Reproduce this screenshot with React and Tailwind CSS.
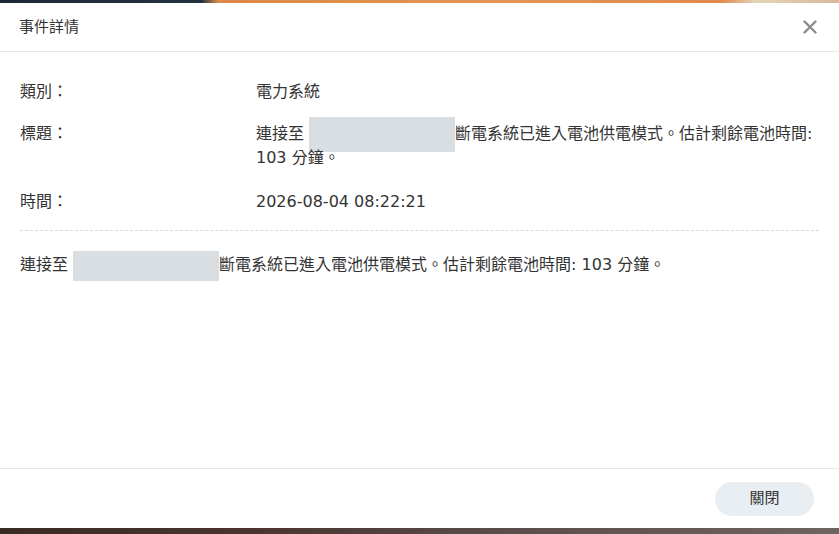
export default function App() {
  const font = { fontFamily: '"DejaVu Sans", "Noto Sans CJK TC", sans-serif' };
  return (
    <div
      className="h-[534px] w-full overflow-hidden bg-[linear-gradient(90deg,#3a2a26_0%,#4a3430_30%,#5a4c4c_60%,#6e6462_100%)]"
      style={font}
    >
      <div className="h-[3px] w-full bg-[linear-gradient(90deg,#1d2836_0%,#243142_24%,#dd8846_26%,#e59451_60%,#e08a4c_86%,#e4d4b6_90%,#d9b89a_100%)]" />
      <div className="flex h-[525px] flex-col bg-white text-[16px] text-[#333]">
        {/* header */}
        <div className="flex h-[49px] shrink-0 items-center justify-between border-b border-[#e6e6e6] pl-[19px] pr-[22px]">
          <span className="text-[15px] text-[#333]">事件詳情</span>
          <svg width="14" height="14" viewBox="0 0 14 14" className="text-[#8c8c8c]">
            <path d="M1.5 1.5 L12.5 12.5 M12.5 1.5 L1.5 12.5" stroke="currentColor" strokeWidth="2.4" strokeLinecap="round" />
          </svg>
        </div>

        {/* body */}
        <div className="flex-1 px-5 pt-[28px] leading-[24px]">
          <div className="flex">
            <div className="w-[236px] shrink-0">類別：</div>
            <div>電力系統</div>
          </div>
          <div className="mt-[18px] flex">
            <div className="w-[236px] shrink-0">標題：</div>
            <div className="flex-1">
              連接至{" "}
              <span className="-my-[6px] inline-block h-[35px] w-[146px] align-middle bg-[#d9dee3]" />
              斷電系統已進入電池供電模式。估計剩餘電池時間: 103 分鐘。
            </div>
          </div>
          <div className="mt-[20px] flex">
            <div className="w-[236px] shrink-0">時間：</div>
            <div>2026-08-04 08:22:21</div>
          </div>
          <div className="mt-[16px] border-t border-dashed border-[#d9d9d9]" />
          <div className="mt-[22px]">
            連接至{" "}
            <span className="-my-[3px] inline-block h-[30px] w-[146px] align-middle bg-[#d9dee3]" />
            斷電系統已進入電池供電模式。估計剩餘電池時間: 103 分鐘。
          </div>
        </div>

        {/* footer */}
        <div className="flex h-[60px] shrink-0 items-center justify-end border-t border-[#e6e6e6] pr-[25px]">
          <button className="h-[34px] w-[99px] rounded-full bg-[#e9eef3] text-[15px] text-[#333]">
            關閉
          </button>
        </div>
      </div>
    </div>
  );
}
